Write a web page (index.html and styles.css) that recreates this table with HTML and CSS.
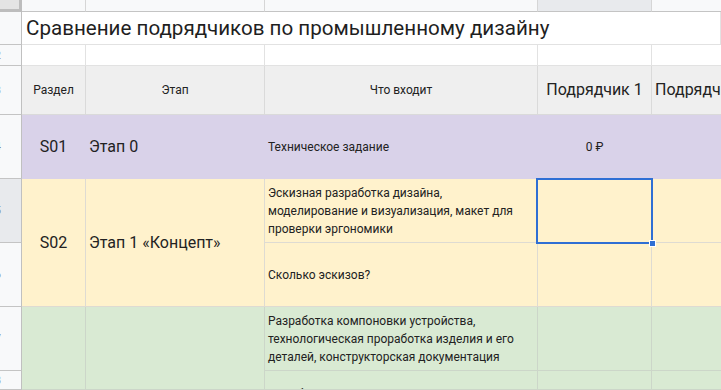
FILE: index.html
```html
<!DOCTYPE html>
<html lang="ru">
<head>
<meta charset="utf-8">
<title>Сравнение подрядчиков</title>
<link rel="stylesheet" href="styles.css">
</head>
<body>
<div class="sheet">
  <div class="corner c0"></div>
  <div class="colhead c1"><span>A</span></div>
  <div class="colhead c2"><span>B</span></div>
  <div class="colhead c3"><span>C</span></div>
  <div class="colhead c4 active"><span>D</span></div>
  <div class="colhead c5 last"><span>E</span></div>

  <div class="rowhead r1 c0"><span>1</span></div>
  <div class="cell title r1">Сравнение подрядчиков по промышленному дизайну</div>

  <div class="rowhead r2 c0"><span>2</span></div>
  <div class="cell r2 c1"></div>
  <div class="cell r2 c2"></div>
  <div class="cell r2 c3"></div>
  <div class="cell r2 c4"></div>
  <div class="cell r2 c5 last"></div>

  <div class="rowhead r3 c0"><span>3</span></div>
  <div class="cell hd r3 c1 center small">Раздел</div>
  <div class="cell hd r3 c2 center small">Этап</div>
  <div class="cell hd r3 c3 center small">Что входит</div>
  <div class="cell hd r3 c4 center big">Подрядчик 1</div>
  <div class="cell hd r3 c5 last big nowrap">Подрядчик 2</div>

  <div class="rowhead r4 c0"><span>4</span></div>
  <div class="cell purple r4 c1 center big">S01</div>
  <div class="cell purple r4 c2 big">Этап 0</div>
  <div class="cell purple r4 c3 small">Техническое задание</div>
  <div class="cell purple r4 c4 center small">0 ₽</div>
  <div class="cell purple r4 c5 last"></div>

  <div class="rowhead r5 c0 active"><span>5</span></div>
  <div class="cell yellow r56 c1 center big">S02</div>
  <div class="cell yellow r56 c2 big nowrap">Этап 1 «Концепт»</div>
  <div class="cell yellow r5 c3 small">Эскизная разработка дизайна, моделирование и визуализация, макет для проверки эргономики</div>
  <div class="cell yellow r5 c4 selected"><span class="handle"></span></div>
  <div class="cell yellow r5 c5 last"></div>

  <div class="rowhead r6 c0"><span>6</span></div>
  <div class="cell yellow r6 c3 small">Сколько эскизов?</div>
  <div class="cell yellow r6 c4"></div>
  <div class="cell yellow r6 c5 last"></div>

  <div class="rowhead r7 c0"><span>7</span></div>
  <div class="cell green r78 c1"></div>
  <div class="cell green r78 c2"></div>
  <div class="cell green r7 c3 small">Разработка компоновки устройства, технологическая проработка изделия и его деталей, конструкторская документация</div>
  <div class="cell green r7 c4"></div>
  <div class="cell green r7 c5 last"></div>

  <div class="rowhead r8 c0"><span>8</span></div>
  <div class="cell green r8 c3 small top">Доработка</div>
  <div class="cell green r8 c4"></div>
  <div class="cell green r8 c5 last"></div>
</div>
</body>
</html>
```

FILE: styles.css
```css
html, body {
  margin: 0;
  padding: 0;
  background: #ffffff;
  overflow: hidden;
}

.sheet {
  width: 721px;
  height: 390px;
  overflow: hidden;
  display: grid;
  grid-template-columns: 22px 64px 179px 273px 114px 1fr;
  grid-template-rows: 12px 33px 21px 49px 64px 64px 64px 64px 1fr;
  font-family: Roboto, "Noto Sans", sans-serif;
  color: #222222;
}

.sheet > div {
  box-sizing: border-box;
  min-width: 0;
  overflow: hidden;
}

/* placement */
.c0 { grid-column: 1; }
.c1 { grid-column: 2; }
.c2 { grid-column: 3; }
.c3 { grid-column: 4; }
.c4 { grid-column: 5; }
.c5 { grid-column: 6; }
.r1 { grid-row: 2; }
.r2 { grid-row: 3; }
.r3 { grid-row: 4; }
.r4 { grid-row: 5; }
.r5 { grid-row: 6; }
.r6 { grid-row: 7; }
.r7 { grid-row: 8; }
.r8 { grid-row: 9; }
.r56 { grid-row: 6 / 8; }
.r78 { grid-row: 8 / 10; }

.corner {
  grid-row: 1;
  background: #e4e4e4;
  border-right: 3px solid #bdbdbd;
  border-bottom: 3px solid #bdbdbd;
}

.colhead {
  grid-row: 1;
  background: #f8f9fa;
  border-right: 1px solid #d6d6d6;
  border-bottom: 1px solid #c4c4c4;
  display: flex;
  justify-content: center;
  align-items: flex-start;
  font-size: 11px;
  color: #7a7a7a;
}
.colhead span {
  display: block;
  line-height: 14px;
  margin-top: -10px;
}
.colhead.active {
  background: #e8eaed;
}
.colhead.last {
  border-right: none;
}

.rowhead {
  background: #f8f9fa;
  border-right: 1px solid #c0c0c0;
  border-bottom: 1px solid #c4c4c4;
  display: flex;
  align-items: center;
  font-size: 10px;
  color: #7a7a7a;
}
.rowhead span {
  display: block;
  flex: none;
  width: 46px;
  margin-left: -25px;
  text-align: center;
}
.rowhead.active {
  background: #e8eaed;
}

.cell {
  background: #ffffff;
  border-right: 1px solid #e2e2e2;
  border-bottom: 1px solid #e2e2e2;
  display: flex;
  align-items: center;
  padding: 0 3px;
  line-height: 18px;
}
.cell.last {
  border-right: none;
}

.title {
  grid-column: 2 / 7;
  font-size: 20.6px;
  padding-left: 4px;
  white-space: nowrap;
  color: #1f1f1f;
}

.hd {
  background: #efefef;
  border-right-color: #dadada;
  border-bottom-color: #dadada;
}

.center {
  justify-content: center;
  text-align: center;
}
.small {
  font-size: 12px;
}
.big {
  font-size: 16px;
}
.nowrap {
  white-space: nowrap;
}
.top {
  align-items: flex-start;
  padding-top: 14px;
}

.purple {
  background: #d9d2e9;
  border-right-color: #d9d2e9;
  border-bottom-color: #d9d2e9;
}
.yellow {
  background: #fff2cc;
  border-right-color: #dedbd2;
  border-bottom-color: #dedbd2;
}
.green {
  background: #d9ead3;
  border-right-color: #ccd6c9;
  border-bottom-color: #ccd6c9;
}

.selected {
  position: relative;
  overflow: visible !important;
  z-index: 2;
}
.selected::after {
  content: "";
  position: absolute;
  left: -2px;
  top: -1px;
  right: -2px;
  bottom: -2px;
  border: 2px solid #2f6fd4;
}
.handle {
  position: absolute;
  right: -5px;
  bottom: -5px;
  width: 7px;
  height: 7px;
  background: #2f6fd4;
  border: 1px solid #ffffff;
  box-sizing: border-box;
  z-index: 3;
}
```
